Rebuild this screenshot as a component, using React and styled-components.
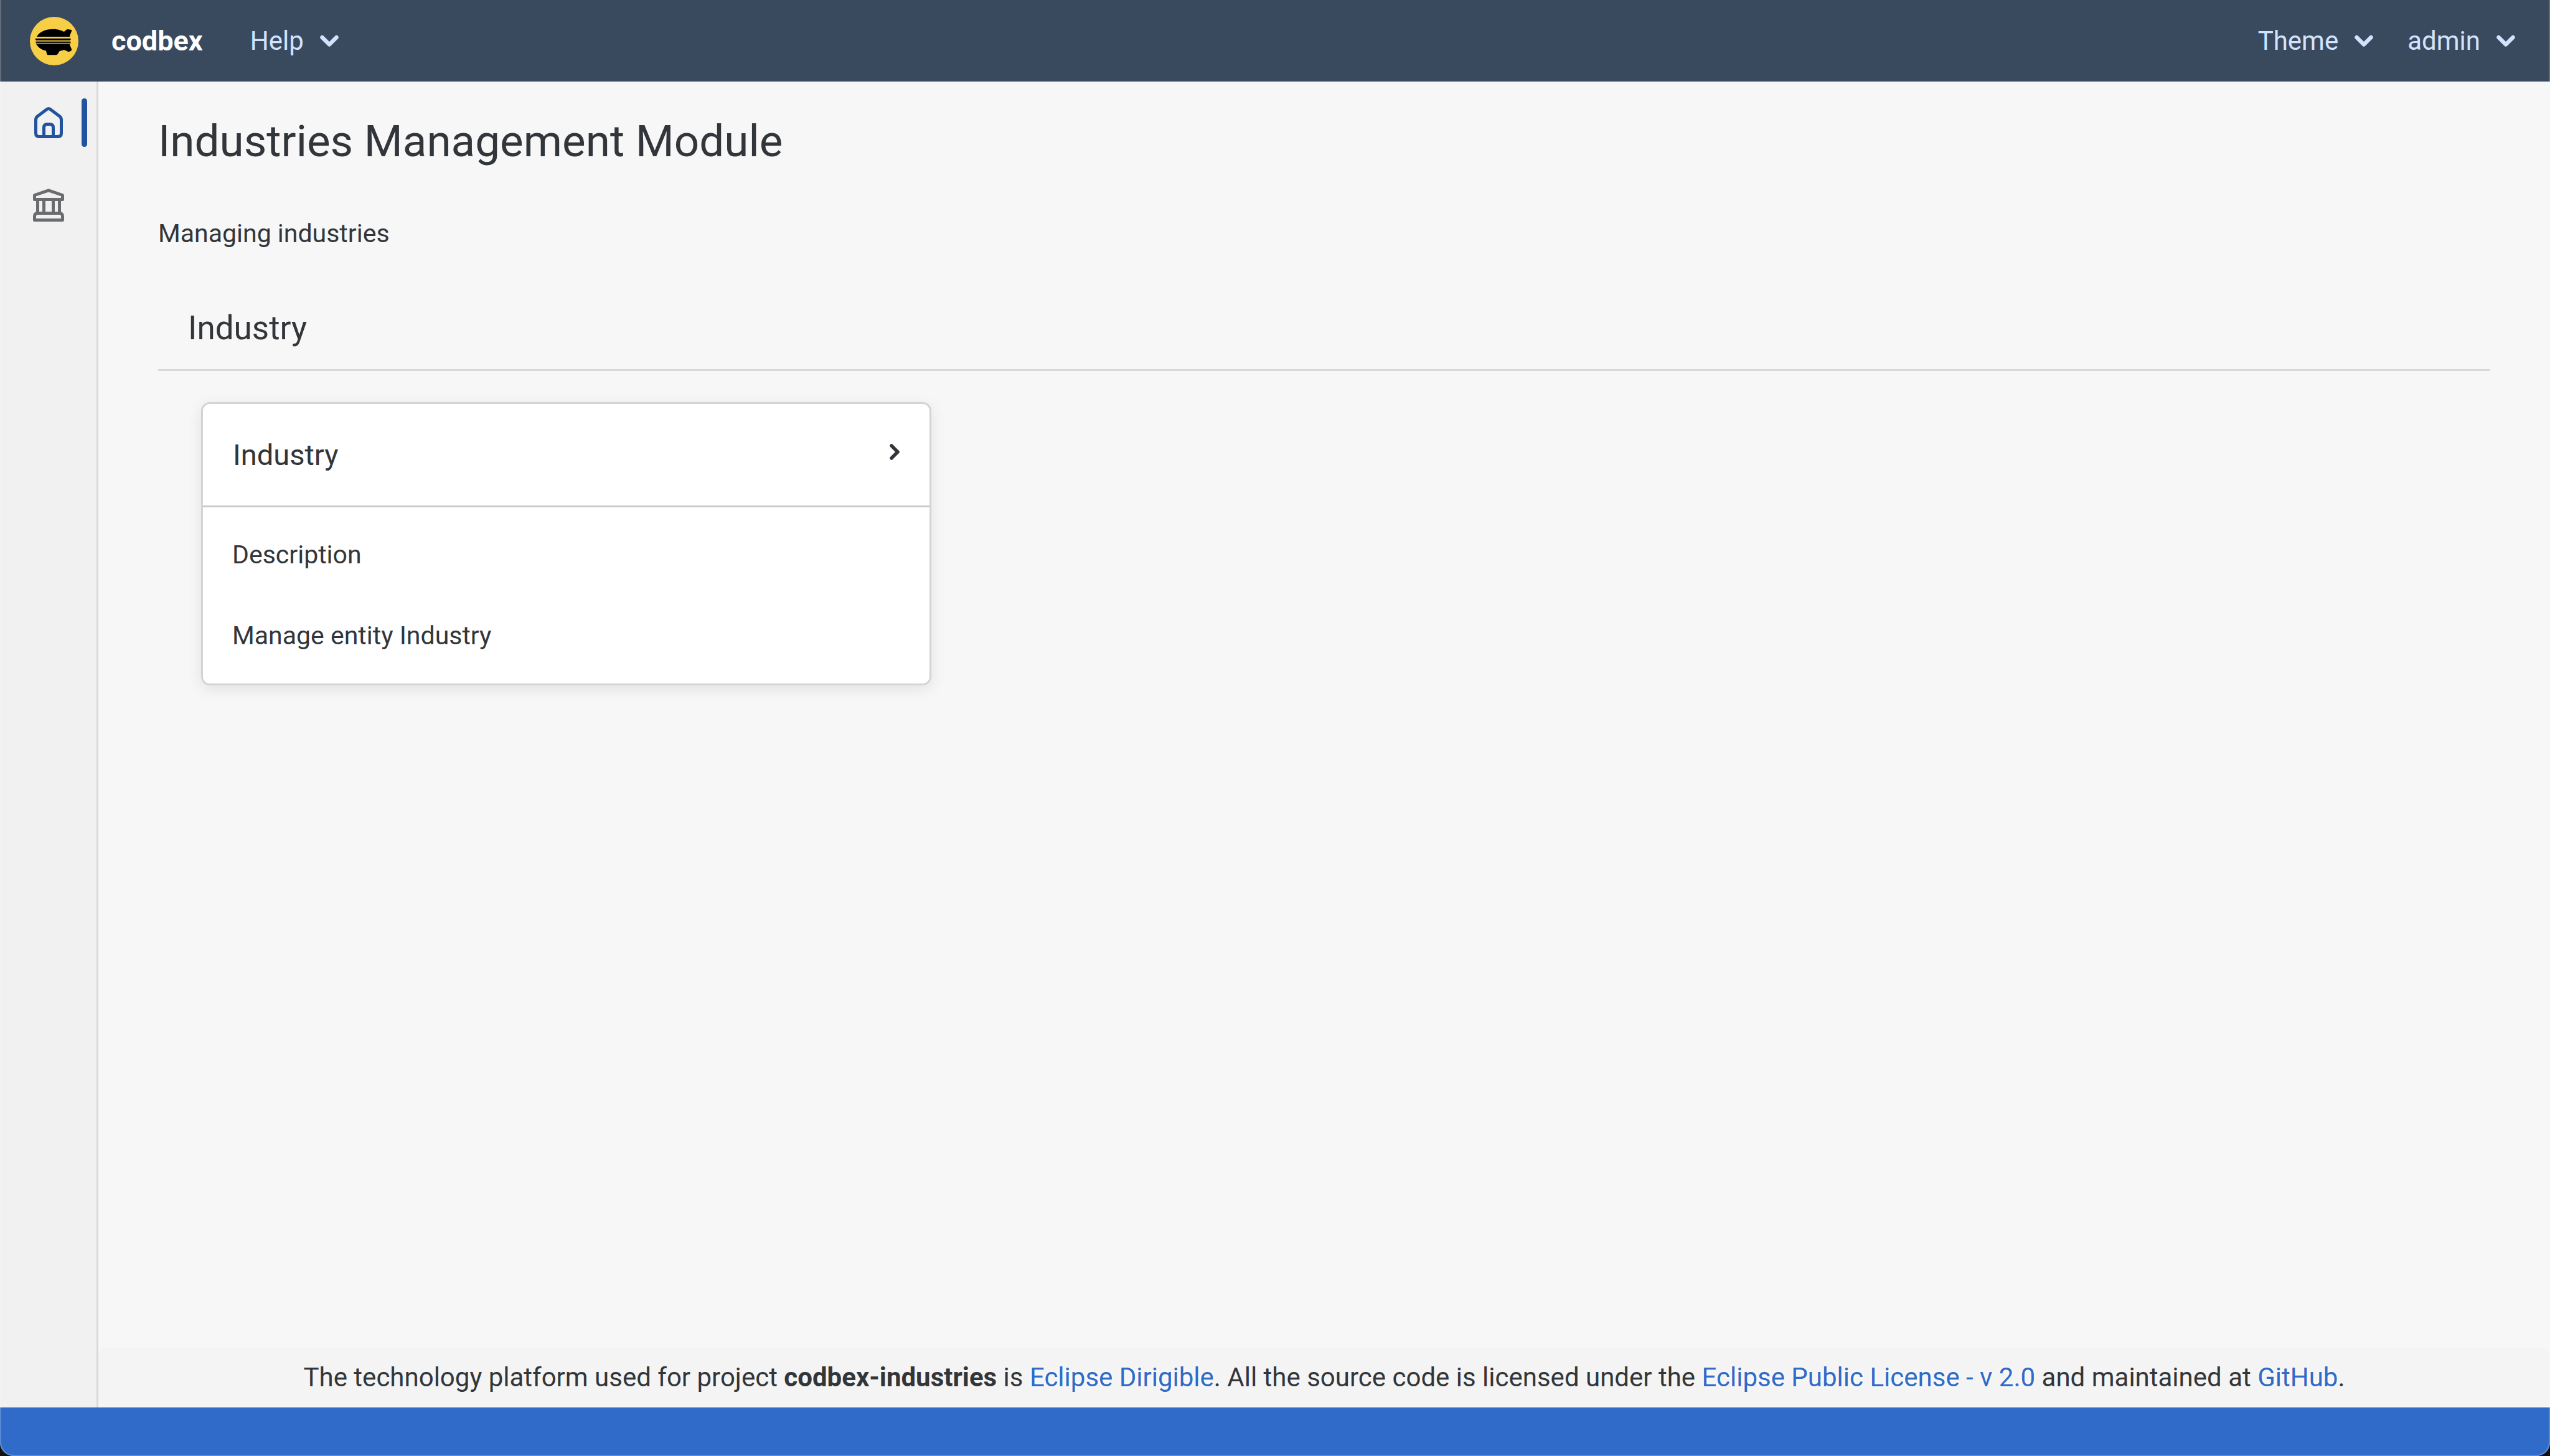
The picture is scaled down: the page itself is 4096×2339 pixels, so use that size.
import React from "react";
import styled, { createGlobalStyle } from "styled-components";

const GlobalStyle = createGlobalStyle`
  *, *::before, *::after { box-sizing: border-box; }
  body {
    margin: 0;
    background: #111214;
    color: #32363a;
    font-family: Roboto, "Noto Sans", sans-serif;
    font-size: 42px;
    line-height: 50px;
  }
  h1, h2, h3, p { margin: 0; font-weight: 400; }
`;

const Window = styled.div`
  position: relative;
  display: grid;
  grid-template-rows: auto 1fr auto;
  min-height: 100vh;
  overflow: hidden;
  border-radius: 0 0 22px 22px;
  background: #f7f7f7;

  &::after {
    content: "";
    position: absolute;
    inset: 0;
    border: 2px solid rgba(255, 255, 255, 0.2);
    border-top: 0;
    border-radius: 0 0 22px 22px;
    pointer-events: none;
  }
`;

const ShellBar = styled.header`
  display: flex;
  align-items: center;
  justify-content: space-between;
  height: 131px;
  padding: 0 56px 0 48px;
  background: #3a4a5e;
`;

const BarGroup = styled.div`
  display: flex;
  align-items: center;
  gap: ${({ $gap }) => $gap}px;
`;

const Brand = styled.div`
  display: flex;
  align-items: center;
  gap: 53px;
  color: #fff;
  font-size: 45px;
  font-weight: 700;
`;

const LogoSvg = styled.svg`
  display: block;
  width: 78px;
  height: 78px;
`;

const MenuButton = styled.button`
  display: flex;
  align-items: center;
  gap: 26px;
  padding: 0;
  border: 0;
  background: none;
  color: #d1e3ff;
  font: inherit;
  cursor: pointer;
`;

const StrokeIcon = styled.svg`
  display: block;
  width: ${({ $w }) => $w}px;
  height: ${({ $h }) => $h}px;
  fill: none;
  stroke: currentColor;
  stroke-width: ${({ $stroke }) => $stroke};
  stroke-linecap: round;
  stroke-linejoin: round;
`;

const Body = styled.div`
  display: grid;
  grid-template-columns: 158px 1fr;
`;

const SideNav = styled.nav`
  display: flex;
  flex-direction: column;
  border-right: 3px solid #d9d9d9;
  background: #f1f1f1;
`;

const NavButton = styled.button`
  position: relative;
  display: flex;
  align-items: center;
  justify-content: center;
  height: 132px;
  padding: 0;
  border: 0;
  background: none;
  color: ${({ $active }) => ($active ? "#22539e" : "#6a6d70")};
  cursor: pointer;

  &::after {
    content: "";
    display: ${({ $active }) => ($active ? "block" : "none")};
    position: absolute;
    top: 27px;
    right: 15px;
    width: 9px;
    height: 78px;
    border-radius: 5px;
    background: #22539e;
  }
`;

const Content = styled.div`
  display: flex;
  flex-direction: column;
  min-width: 0;
`;

const Main = styled.main`
  flex: 1;
  padding: 53px 96px;
  font-size: 41px;
`;

const PageTitle = styled.h1`
  font-size: 71px;
  line-height: 86px;
`;

const Lead = styled.p`
  margin-top: 80px;
`;

const SectionTitle = styled.h2`
  margin-top: 94px;
  padding: 0 48px 33px;
  border-bottom: 3px solid #d9d9d9;
  font-size: 53px;
  line-height: 66px;
`;

const CardGrid = styled.div`
  display: grid;
  grid-template-columns: repeat(3, 1fr);
  gap: 44px;
  padding: 50px 69px;
`;

const Card = styled.article`
  border: 3px solid #d4d4d4;
  border-radius: 14px;
  background: #fff;
  box-shadow: 0 6px 24px rgba(0, 0, 0, 0.09);
`;

const CardHeader = styled.div`
  display: flex;
  align-items: center;
  justify-content: space-between;
  height: 166px;
  padding: 0 48px;
  border-bottom: 3px solid #cacaca;
`;

const CardTitle = styled.h3`
  font-size: 47px;
  line-height: 60px;
`;

const OpenButton = styled.button`
  padding: 0 0 10px;
  border: 0;
  background: none;
  color: #32363a;
  cursor: pointer;
`;

const CardBody = styled.div`
  display: flex;
  flex-direction: column;
  gap: 80px;
  padding: 51px 47px 52px;
`;

const Footer = styled.footer`
  padding: 23px 48px;
  border-radius: 12px;
  background: #f4f4f4;
  text-align: center;
`;

const Link = styled.a`
  color: #2f6bc9;
  text-decoration: none;
  text-shadow: 0 0 6px #fff;
`;

const StatusBar = styled.div`
  height: 78px;
  background: #306bca;
`;

function Logo() {
  return (
    <LogoSvg viewBox="0 0 78 78" aria-hidden="true">
      <circle cx="39" cy="39" r="39" fill="#f7cf46" />
      <path d="M11 32 C15 24 25 19.7 37.7 19.7 C45 19.7 51 22 54.7 24 C57 23 58 20 61 20 C63 20 65 21.2 67.3 21 C67 25 64.5 27 64 32 Z" />
      <rect x="9" y="34.8" width="56.5" height="2.3" />
      <rect x="9.5" y="38.4" width="55.5" height="1" />
      <rect x="9.5" y="40.5" width="56" height="2.1" />
      <path d="M10.3 44 H64 C64.3 48 67.5 50 67 54 C65 55.5 63 56.3 61.3 56 C58 54.5 56 53 54 53.3 C52 54.5 50 54.5 47.7 55 C46 57 45.5 60 43 61.3 H28.5 C26 59 27.5 56.5 25.3 54.3 C18 53 13 48.5 10.3 44 Z" />
    </LogoSvg>
  );
}

function Menu({ label }) {
  return (
    <MenuButton type="button" aria-haspopup="menu">
      {label}
      <StrokeIcon $w={30} $h={20} $stroke={6.5} viewBox="0 0 30 20" aria-hidden="true">
        <path d="M3.5 4 L15 15.5 L26.5 4" />
      </StrokeIcon>
    </MenuButton>
  );
}

function HomeIcon() {
  return (
    <StrokeIcon $w={60} $h={60} $stroke={5} viewBox="0 0 60 60" aria-hidden="true">
      <path d="M27.3 8.5 L12 20 Q9.5 22 9.5 26 V47 Q9.5 52.5 15 52.5 H45 Q50.5 52.5 50.5 47 V26 Q50.5 22 48 20 L32.7 8.5 Q30 6.5 27.3 8.5 Z" />
      <path d="M22.5 52 V38 Q22.5 32.5 28 32.5 H32 Q37.5 32.5 37.5 38 V52" />
    </StrokeIcon>
  );
}

function BankIcon() {
  return (
    <StrokeIcon $w={60} $h={60} $stroke={5} viewBox="0 0 60 60" aria-hidden="true">
      <path d="M7.5 21.5 V14.5 L30 6.8 L52.5 14.5 V21.5 Z" />
      <path d="M12.5 22 V43 M22.5 22 V43 M37.5 22 V43 M47.5 22 V43" />
      <path d="M7.5 54.5 V48.5 Q7.5 43.5 12.5 43.5 H47.5 Q52.5 43.5 52.5 48.5 V54.5 Z" />
    </StrokeIcon>
  );
}

export default function App() {
  return (
    <>
      <GlobalStyle />
      <Window>
        <ShellBar>
          <BarGroup $gap={76}>
            <Brand>
              <Logo />
              <span>codbex</span>
            </Brand>
            <Menu label="Help" />
          </BarGroup>
          <BarGroup $gap={55}>
            <Menu label="Theme" />
            <Menu label="admin" />
          </BarGroup>
        </ShellBar>
        <Body>
          <SideNav aria-label="Modules">
            <NavButton type="button" $active aria-label="Home">
              <HomeIcon />
            </NavButton>
            <NavButton type="button" aria-label="Industries">
              <BankIcon />
            </NavButton>
          </SideNav>
          <Content>
            <Main>
              <PageTitle>Industries Management Module</PageTitle>
              <Lead>Managing industries</Lead>
              <SectionTitle>Industry</SectionTitle>
              <CardGrid>
                <Card>
                  <CardHeader>
                    <CardTitle>Industry</CardTitle>
                    <OpenButton type="button" aria-label="Open">
                      <StrokeIcon $w={16} $h={26} $stroke={5.5} viewBox="0 0 16 26" aria-hidden="true">
                        <path d="M3 3 L13 13 L3 23" />
                      </StrokeIcon>
                    </OpenButton>
                  </CardHeader>
                  <CardBody>
                    <p>Description</p>
                    <p>Manage entity Industry</p>
                  </CardBody>
                </Card>
              </CardGrid>
            </Main>
            <Footer>
              The technology platform used for project <strong>codbex-industries</strong> is{" "}
              <Link href="#dirigible">Eclipse Dirigible</Link>. All the source code is licensed under the{" "}
              <Link href="#license">Eclipse Public License - v 2.0</Link> and maintained at{" "}
              <Link href="#github">GitHub</Link>.
            </Footer>
          </Content>
        </Body>
        <StatusBar />
      </Window>
    </>
  );
}
